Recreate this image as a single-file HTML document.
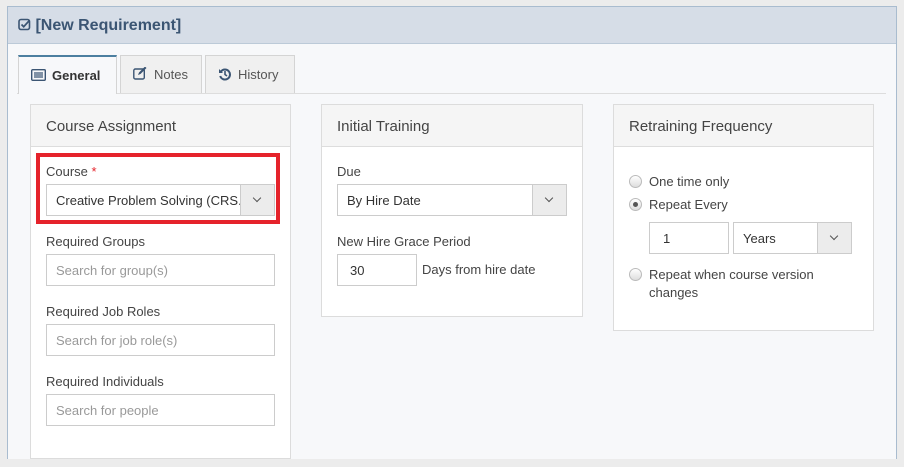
<!DOCTYPE html>
<html><head><meta charset="utf-8"><style>
*{box-sizing:border-box;margin:0;padding:0}
body{width:904px;height:467px;background:#ececec;font-family:"Liberation Sans",sans-serif;color:#333;position:relative;overflow:hidden;font-size:13px}
.a{position:absolute}
.outer{left:7px;top:6px;width:890px;height:453px;background:#f7f8fa;border:1px solid #a9bccf;border-bottom:none}
.hdr{left:8px;top:7px;width:888px;height:37px;background:#d6dde7;border-bottom:1px solid #bccad8}
.tab{height:38px;top:55px;border:1px solid #d4d4d4;border-bottom:none;background:#f0f0f0;color:#555;font-size:13px;line-height:37px;padding-left:12px}
.card{background:#fff;border:1px solid #dcdcdc}
.ch{height:42px;background:#f5f5f5;border-bottom:1px solid #ddd;font-size:15px;color:#444;line-height:44px;padding-left:15px}
.lbl{font-size:13px;color:#444}
.inp{background:#fff;border:1px solid #ccc;height:32px;font-size:13px;line-height:32px;padding-left:9px;color:#333}
.ph{color:#999}
.dd{position:absolute;right:0;top:0;width:34px;height:30px;background:#ececec;border-left:1px solid #ccc}
.dd:after{content:"";position:absolute;left:13px;top:10px;width:5px;height:5px;border-right:1px solid #555;border-bottom:1px solid #555;transform:rotate(45deg)}
.rad{width:13px;height:13px;border-radius:50%;border:1px solid #bbb;background:linear-gradient(#fff,#ddd)}
</style></head><body>
<div class="a outer"></div>
<div class="a hdr"></div>
<div class="a" style="left:18px;top:17px;font-size:16px;font-weight:bold;color:#3b5573">
<svg width="13" height="13" viewBox="0 0 13 13" style="vertical-align:-1px"><rect x="1" y="1.5" width="10.5" height="10" rx="2" fill="none" stroke="#3b5573" stroke-width="1.6"/><path d="M3.5 6.5l2.2 2.2 5.5-6" fill="none" stroke="#3b5573" stroke-width="1.8"/></svg> [New Requirement]</div>
<div class="a" style="left:17px;top:93px;width:869px;height:1px;background:#ddd"></div>
<div class="a tab" style="left:18px;width:99px;background:#f7f8fa;border-top:2px solid #4c7fa0;height:39px;font-weight:bold;color:#333">
<svg width="15" height="12" viewBox="0 0 15 12" style="vertical-align:-1px;margin-right:6px"><rect x="0.7" y="0.7" width="13.6" height="10.6" rx="1" fill="none" stroke="#3b5573" stroke-width="1.4"/><path d="M3 4h9M3 6h9M3 8h9" stroke="#3b5573" stroke-width="1.2"/></svg>General</div>
<div class="a tab" style="left:120px;width:82px"><svg width="15" height="13" viewBox="0 0 15 13" style="vertical-align:-1px;margin-right:6px"><rect x="0.8" y="2" width="10.5" height="10" rx="1.5" fill="none" stroke="#3b5573" stroke-width="1.4"/><path d="M5 8l1-2.5 6-6 1.5 1.5-6 6z" fill="#3b5573"/></svg>Notes</div>
<div class="a tab" style="left:205px;width:90px"><svg width="14" height="14" viewBox="0 0 14 14" style="vertical-align:-2px;margin-right:6px"><path d="M3 4.5A5 5 0 1 1 2.2 9" fill="none" stroke="#3b5573" stroke-width="2"/><path d="M1 2v4h4z" fill="#3b5573"/><path d="M7 4v3.5l2 1.5" fill="none" stroke="#3b5573" stroke-width="1.6"/></svg>History</div>

<div class="a card" style="left:30px;top:104px;width:261px;height:355px"><div class="ch">Course Assignment</div></div>
<div class="a" style="left:36px;top:153px;width:244px;height:71px;border:4px solid #e5232b"></div>
<div class="a lbl" style="left:46px;top:164px">Course <span style="color:#e5232b">*</span></div>
<div class="a inp" style="left:46px;top:184px;width:229px">Creative Problem Solving (CRS.<div class="dd"></div></div>
<div class="a lbl" style="left:46px;top:234px">Required Groups</div>
<div class="a inp ph" style="left:46px;top:254px;width:229px">Search for group(s)</div>
<div class="a lbl" style="left:46px;top:304px">Required Job Roles</div>
<div class="a inp ph" style="left:46px;top:324px;width:229px">Search for job role(s)</div>
<div class="a lbl" style="left:46px;top:374px">Required Individuals</div>
<div class="a inp ph" style="left:46px;top:394px;width:229px">Search for people</div>

<div class="a card" style="left:321px;top:104px;width:262px;height:213px"><div class="ch">Initial Training</div></div>
<div class="a lbl" style="left:337px;top:164px">Due</div>
<div class="a inp" style="left:337px;top:184px;width:230px">By Hire Date<div class="dd"></div></div>
<div class="a lbl" style="left:337px;top:234px">New Hire Grace Period</div>
<div class="a inp" style="left:337px;top:254px;width:80px;padding-left:12px">30</div>
<div class="a lbl" style="left:422px;top:262px">Days from hire date</div>

<div class="a card" style="left:613px;top:104px;width:261px;height:227px"><div class="ch">Retraining Frequency</div></div>
<div class="a rad" style="left:629px;top:175px"></div>
<div class="a lbl" style="left:649px;top:174px">One time only</div>
<div class="a rad" style="left:629px;top:198px"><div style="position:absolute;left:3px;top:3px;width:5px;height:5px;border-radius:50%;background:#555"></div></div>
<div class="a lbl" style="left:649px;top:197px">Repeat Every</div>
<div class="a inp" style="left:649px;top:222px;width:80px;padding-left:13px">1</div>
<div class="a inp" style="left:733px;top:222px;width:119px">Years<div class="dd"></div></div>
<div class="a rad" style="left:629px;top:268px"></div>
<div class="a lbl" style="left:649px;top:266px;line-height:18px">Repeat when course version<br>changes</div>
</body></html>
